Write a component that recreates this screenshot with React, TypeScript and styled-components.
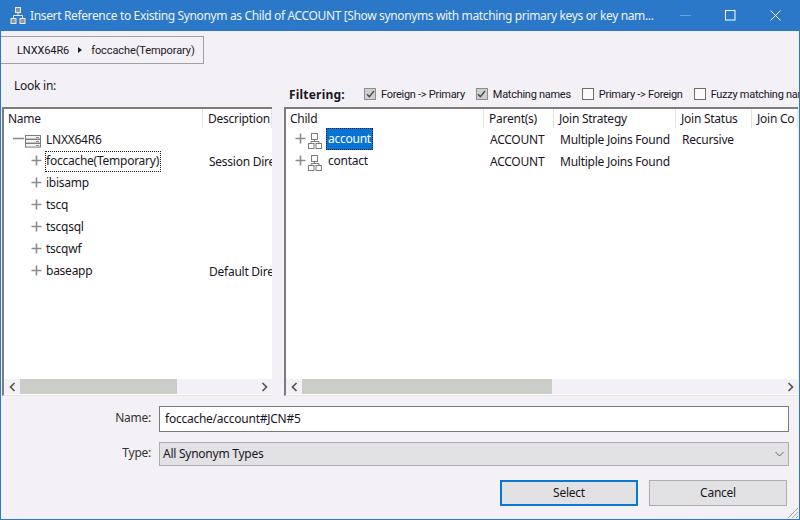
import React from "react"
import styled, { createGlobalStyle } from "styled-components"

const GlobalStyle = createGlobalStyle`
  html, body {
    margin: 0;
    padding: 0;
    background: #f3f1f5;
  }
  body {
    font-family: "Noto Sans", "Open Sans", sans-serif;
    font-size: 12px;
    letter-spacing: -0.25px;
    color: #1a1626;
  }
`

const PlusIcon = () => (
  <Expander width="11" height="11" viewBox="0 0 11 11">
    <path d="M5.5 0.5v10M0.5 5.5h10" stroke="#8c8c8c" strokeWidth="1.6" fill="none" />
  </Expander>
)

const MinusIcon = () => (
  <Expander width="11" height="11" viewBox="0 0 11 11">
    <path d="M0 5.5h11" stroke="#8c8c8c" strokeWidth="1.6" fill="none" />
  </Expander>
)

const ServerIcon = () => (
  <RowIcon width="16" height="13" viewBox="0 0 16 13">
    <g fill="#f4f4f4" stroke="#7d7d7d" strokeWidth="1">
      <rect x="0.5" y="0.5" width="15" height="3.6" />
      <rect x="0.5" y="4.5" width="15" height="3.6" />
      <rect x="0.5" y="8.5" width="15" height="3.6" />
    </g>
    <path d="M11 2.5h3M11 6.5h3M11 10.5h3" stroke="#8c8c8c" strokeWidth="1" />
  </RowIcon>
)

const JoinIcon = () => (
  <RowIcon width="14" height="16" viewBox="0 0 14 16">
    <g fill="none" stroke="#7d7d7d" strokeWidth="1">
      <rect x="3.5" y="0.5" width="6" height="6" />
      <rect x="0.5" y="10.5" width="5.5" height="5" />
      <rect x="8" y="10.5" width="5.5" height="5" />
      <path d="M6.5 6.5v2M3 10.5v-2h8v2" />
    </g>
  </RowIcon>
)

const TitleIcon = () => (
  <svg width="16" height="17" viewBox="0 0 16 17">
    <g fill="#8f959c" stroke="#e9ecef" strokeWidth="1">
      <rect x="5.5" y="0.5" width="5" height="5" />
      <rect x="1" y="11.5" width="5" height="5" />
      <rect x="10" y="11.5" width="5" height="5" />
      <path d="M8 5.5v3M3.5 11.5v-3h9v3" fill="none" />
    </g>
  </svg>
)

const ChevronLeft = () => (
  <svg width="7" height="10" viewBox="0 0 7 10">
    <path d="M5.5 1L1.5 5l4 4" stroke="#555" strokeWidth="1.7" fill="none" />
  </svg>
)

const ChevronRight = () => (
  <svg width="7" height="10" viewBox="0 0 7 10">
    <path d="M1.5 1l4 4-4 4" stroke="#555" strokeWidth="1.7" fill="none" />
  </svg>
)

const Check = () => (
  <svg width="9" height="8" viewBox="0 0 9 8">
    <path d="M1 4.2l2.4 2.4L8 1" stroke="#4c4c4c" strokeWidth="1.4" fill="none" />
  </svg>
)

const FILTERS = [
  { label: "Foreign -> Primary", checked: true },
  { label: "Matching names", checked: true },
  { label: "Primary -> Foreign", checked: false },
  { label: "Fuzzy matching names", checked: false },
]

const TREE_ITEMS = [
  { name: "foccache(Temporary)", description: "Session Dire", focused: true },
  { name: "ibisamp", description: "" },
  { name: "tscq", description: "" },
  { name: "tscqsql", description: "" },
  { name: "tscqwf", description: "" },
  { name: "baseapp", description: "Default Dire" },
]

const TREE_COLUMNS = "199px 1fr"
const CHILD_COLUMNS = "198px 70px 122px 76px 1fr"

const CHILD_ROWS = [
  { name: "account", parent: "ACCOUNT", strategy: "Multiple Joins Found", status: "Recursive", selected: true },
  { name: "contact", parent: "ACCOUNT", strategy: "Multiple Joins Found", status: "" },
]

export default function App() {
  return (
    <Window>
      <GlobalStyle />
      <TitleBar>
        <TitleIcon />
        <TitleText>Insert Reference to Existing Synonym as Child of ACCOUNT [Show synonyms with matching primary keys or key nam...</TitleText>
        <WindowButtons>
          <WindowButton>
            <svg width="11" height="11" viewBox="0 0 11 11">
              <path d="M0 5.5h11" stroke="#6d9fd9" strokeWidth="1" />
            </svg>
          </WindowButton>
          <WindowButton>
            <svg width="11" height="11" viewBox="0 0 11 11">
              <rect x="0.5" y="0.5" width="9.5" height="9.5" stroke="#fff" fill="none" />
            </svg>
          </WindowButton>
          <WindowButton>
            <svg width="11" height="11" viewBox="0 0 11 11">
              <path d="M0.5 0.5l10 10M10.5 0.5l-10 10" stroke="#fff" strokeWidth="1" />
            </svg>
          </WindowButton>
        </WindowButtons>
      </TitleBar>

      <Breadcrumb>
        <span>LNXX64R6</span>
        <Arrow />
        <span>foccache(Temporary)</span>
      </Breadcrumb>

      <Labels>
        <LookIn>Look in:</LookIn>
        <Filtering>
          <FilterTitle>Filtering:</FilterTitle>
          {FILTERS.map((f) => (
            <FilterOption key={f.label}>
              <CheckBox $checked={f.checked}>{f.checked && <Check />}</CheckBox>
              {f.label}
            </FilterOption>
          ))}
        </Filtering>
      </Labels>

      <Panels>
        <Panel $width={270}>
          <PanelContent>
            <HeaderRow $columns={TREE_COLUMNS}>
              <HeaderCell>Name</HeaderCell>
              <HeaderCell>Description</HeaderCell>
            </HeaderRow>
            <TreeRoot>
              <MinusIcon />
              <ServerIcon />
              <span>LNXX64R6</span>
            </TreeRoot>
            {TREE_ITEMS.map((item) => (
              <TreeRow key={item.name}>
                <TreeName>
                  <PlusIcon />
                  <TreeLabel $focused={item.focused}>{item.name}</TreeLabel>
                </TreeName>
                <Description>{item.description}</Description>
              </TreeRow>
            ))}
          </PanelContent>
          <ScrollBar>
            <ScrollButton>
              <ChevronLeft />
            </ScrollButton>
            <ScrollTrack>
              <ScrollThumb $percent={66.5} />
            </ScrollTrack>
            <ScrollButton>
              <ChevronRight />
            </ScrollButton>
          </ScrollBar>
        </Panel>

        <Splitter />

        <Panel $width={514}>
          <PanelContent>
            <HeaderRow $columns={CHILD_COLUMNS}>
              <HeaderCell>Child</HeaderCell>
              <HeaderCell>Parent(s)</HeaderCell>
              <HeaderCell>Join Strategy</HeaderCell>
              <HeaderCell>Join Status</HeaderCell>
              <HeaderCell>Join Co</HeaderCell>
            </HeaderRow>
            {CHILD_ROWS.map((row) => (
              <ChildRow key={row.name}>
                <ChildName>
                  <PlusIcon />
                  <JoinIcon />
                  <ChildLabel $selected={row.selected}>{row.name}</ChildLabel>
                </ChildName>
                <ChildCell>{row.parent}</ChildCell>
                <ChildCell>{row.strategy}</ChildCell>
                <ChildCell>{row.status}</ChildCell>
                <ChildCell />
              </ChildRow>
            ))}
          </PanelContent>
          <ScrollBar>
            <ScrollButton>
              <ChevronLeft />
            </ScrollButton>
            <ScrollTrack>
              <ScrollThumb $percent={52} />
            </ScrollTrack>
            <ScrollButton>
              <ChevronRight />
            </ScrollButton>
          </ScrollBar>
        </Panel>
      </Panels>

      <Form>
        <FormRow>
          <FormLabel>Name:</FormLabel>
          <TextInput readOnly value="foccache/account#JCN#5" />
        </FormRow>
        <FormRow>
          <FormLabel>Type:</FormLabel>
          <Select>
            <span>All Synonym Types</span>
            <svg width="9" height="6" viewBox="0 0 9 6">
              <path d="M0.5 1l4 4 4-4" stroke="#666" strokeWidth="1" fill="none" />
            </svg>
          </Select>
        </FormRow>
      </Form>

      <Footer>
        <DialogButton $primary>Select</DialogButton>
        <DialogButton>Cancel</DialogButton>
      </Footer>
      <Grip width="12" height="12" viewBox="0 0 12 12">
        <path d="M11 1L1 11M11 5L5 11M11 9l-2 2" stroke="#a8a8a8" strokeWidth="1" />
      </Grip>
    </Window>
  )
}

const Window = styled.div`
  position: relative;
  box-sizing: border-box;
  width: 800px;
  height: 520px;
  overflow: hidden;
  background: #f3f1f5;
  border: solid #2b78c8;
  border-width: 0 1px 1px 1px;
  display: flex;
  flex-direction: column;
`

const TitleBar = styled.div`
  height: 31px;
  flex: none;
  margin: 0 -1px;
  padding-left: 10px;
  background: #2b78c8;
  color: #fff;
  display: flex;
  align-items: center;
  gap: 4px;
`

const TitleText = styled.div`
  flex: 1;
  white-space: nowrap;
  overflow: hidden;
  letter-spacing: -0.36px;
  color: #eef4fb;
`

const WindowButtons = styled.div`
  display: flex;
  flex: none;
  padding-right: 2px;
`

const WindowButton = styled.div`
  width: 45px;
  height: 31px;
  display: flex;
  align-items: center;
  justify-content: center;
`

const Breadcrumb = styled.div`
  box-sizing: border-box;
  flex: none;
  width: 204px;
  height: 28px;
  margin-top: 5px;
  margin-left: -1px;
  padding-left: 17px;
  border: 1px solid #a0a0a0;
  border-left: none;
  display: flex;
  align-items: center;
  white-space: nowrap;
  font-family: "Roboto", sans-serif;
  font-size: 11px;
  letter-spacing: -0.1px;
`

const Arrow = styled.i`
  width: 0;
  height: 0;
  margin: 0 9px;
  border-left: 4px solid #222;
  border-top: 3px solid transparent;
  border-bottom: 3px solid transparent;
`

const Labels = styled.div`
  height: 43px;
  flex: none;
  display: flex;
  white-space: nowrap;
`

const LookIn = styled.div`
  width: 288px;
  flex: none;
  padding: 13px 0 0 13px;
  box-sizing: border-box;
`

const Filtering = styled.div`
  display: flex;
  align-items: center;
  height: 20px;
  margin-top: 20px;
`

const FilterTitle = styled.div`
  font-weight: 700;
  letter-spacing: 0.2px;
  width: 75px;
  flex: none;
`

const FilterOption = styled.label`
  display: flex;
  align-items: center;
  gap: 5px;
  margin-right: 11px;
  font-family: "Roboto", sans-serif;
  font-size: 11px;
  letter-spacing: -0.28px;
`

const CheckBox = styled.span<{ $checked?: boolean }>`
  box-sizing: border-box;
  width: 12px;
  height: 12px;
  border: 1px solid ${(p) => (p.$checked ? "#8e8e8e" : "#6e6e6e")};
  background: ${(p) => (p.$checked ? "#cfcfcf" : "#fbfbfb")};
  display: flex;
  align-items: center;
  justify-content: center;
`

const Panels = styled.div`
  flex: none;
  height: 289px;
  padding-left: 1px;
  display: flex;
`

const Panel = styled.div<{ $width: number }>`
  box-sizing: border-box;
  width: ${(p) => p.$width}px;
  flex: none;
  border-top: 2px solid #7c7c7c;
  border-left: 2px solid #7c7c7c;
  border-bottom: 1px solid #e6e6e6;
  background: #fff;
  display: flex;
  flex-direction: column;
`

const PanelContent = styled.div`
  flex: 1;
  overflow: hidden;
  min-height: 0;
`

const Splitter = styled.div`
  width: 12px;
  flex: none;
`

const HeaderRow = styled.div<{ $columns: string }>`
  height: 19px;
  display: grid;
  grid-template-columns: ${(p) => p.$columns};
  white-space: nowrap;
`

const HeaderCell = styled.div`
  padding-left: 5px;
  line-height: 19px;
  border-right: 1px solid #e4e4e4;
  overflow: hidden;
  &:first-child {
    padding-left: 4px;
  }
`

const Expander = styled.svg`
  flex: none;
  margin-top: -2px;
`

const RowIcon = styled.svg`
  flex: none;
  margin-top: 4px;
`

const TreeRoot = styled.div`
  height: 22px;
  padding-left: 9px;
  display: flex;
  align-items: center;
  gap: 1px;
  & > span {
    margin-left: 4px;
  }
`

const TreeRow = styled.div`
  height: 22px;
  display: grid;
  grid-template-columns: ${TREE_COLUMNS};
  align-items: center;
  white-space: nowrap;
`

const TreeName = styled.div`
  padding-left: 27px;
  display: flex;
  align-items: center;
  gap: 3px;
`

const TreeLabel = styled.span<{ $focused?: boolean }>`
  line-height: 18px;
  padding-bottom: 1px;
  border: 1px dotted ${(p) => (p.$focused ? "#222" : "transparent")};
  padding-right: 1px;
`

const Description = styled.div`
  padding-left: 6px;
  overflow: hidden;
`

const ChildRow = styled.div`
  height: 22px;
  display: grid;
  grid-template-columns: ${CHILD_COLUMNS};
  align-items: center;
  white-space: nowrap;
`

const ChildName = styled.div`
  padding-left: 9px;
  display: flex;
  align-items: center;
  gap: 2px;
`

const ChildLabel = styled.span<{ $selected?: boolean }>`
  margin-left: 2px;
  padding: 0 1px;
  line-height: 20px;
  border: 1px dotted ${(p) => (p.$selected ? "#10233c" : "transparent")};
  background: ${(p) => (p.$selected ? "#0a74d4" : "transparent")};
  color: ${(p) => (p.$selected ? "#fff" : "inherit")};
`

const ChildCell = styled.div`
  padding-left: 6px;
  overflow: hidden;
`

const ScrollBar = styled.div`
  height: 15px;
  flex: none;
  margin-bottom: 1px;
  background: #f3f1f5;
  display: flex;
`

const ScrollButton = styled.div`
  width: 16px;
  flex: none;
  display: flex;
  align-items: center;
  justify-content: center;
`

const ScrollTrack = styled.div`
  flex: 1;
`

const ScrollThumb = styled.div<{ $percent: number }>`
  height: 100%;
  width: ${(p) => p.$percent}%;
  background: #cbcdc9;
`

const Form = styled.div`
  flex: none;
  padding-top: 10px;
  display: flex;
  flex-direction: column;
  gap: 10px;
`

const FormRow = styled.div`
  display: flex;
  align-items: center;
`

const FormLabel = styled.div`
  width: 150px;
  flex: none;
  padding-bottom: 3px;
  text-align: right;
  margin-right: 8px;
  color: #333;
`

const TextInput = styled.input`
  box-sizing: border-box;
  width: 630px;
  height: 26px;
  padding: 0 5px 2px;
  border: 1px solid #7a7a7a;
  background: #fff;
  outline: none;
  font: inherit;
  letter-spacing: inherit;
  color: inherit;
`

const Select = styled.div`
  box-sizing: border-box;
  width: 630px;
  height: 24px;
  padding: 0 4px 1px 3px;
  border: 1px solid #adadad;
  background: #e2e1e3;
  display: flex;
  align-items: center;
  justify-content: space-between;
`

const Footer = styled.div`
  flex: none;
  margin-top: 14px;
  padding-right: 12px;
  display: flex;
  justify-content: flex-end;
  gap: 11px;
`

const DialogButton = styled.div<{ $primary?: boolean }>`
  box-sizing: border-box;
  width: 138px;
  height: 26px;
  padding-bottom: 1px;
  background: #e2e1e3;
  border: ${(p) => (p.$primary ? "2px solid #0878d4" : "1px solid #adadad")};
  display: flex;
  align-items: center;
  justify-content: center;
`

const Grip = styled.svg`
  position: absolute;
  right: 0;
  bottom: 0;
`
